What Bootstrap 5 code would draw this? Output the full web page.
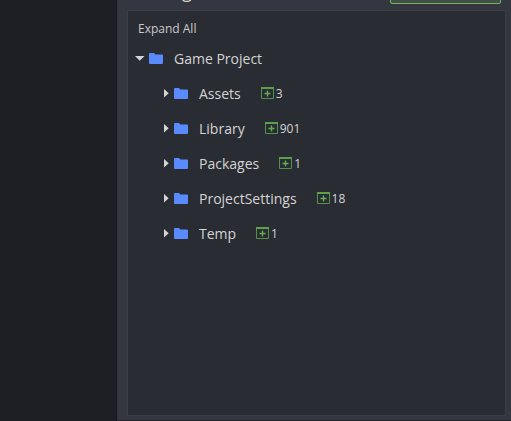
<!DOCTYPE html>
<html lang="en">
<head>
<meta charset="utf-8">
<meta name="viewport" content="width=device-width, initial-scale=1">
<title>Game Project</title>
<link href="https://cdn.jsdelivr.net/npm/bootstrap@5.3.0/dist/css/bootstrap.min.css" rel="stylesheet">
<style>
body{font-family:"Open Sans","Noto Sans",sans-serif;font-size:14px;background:#343740;color:#d4d4d4}
.side{width:117px;background:#1e1f24;border-right:1px solid #17181c}
.main-area{padding:0 5px 4px 10px;border-bottom:1px solid #25272d}
.top-strip{height:10px;padding:0 5px 0 55px}
.heading{font-size:18px;line-height:24px;margin-top:-21px}
.action{width:111px;height:34px;margin-top:-30px;border:1px solid #6cbb55;border-radius:2px;background:#454d4a}
.panel{background:#292c33;border:1px solid #3b3e46;padding:7px 0 0 6px}
.expand{font-size:12px;line-height:22px;padding-left:4px;margin-bottom:1px;color:#cacaca}
.tree-row{height:35px}
.children-list{padding-left:25px}
.arrow{width:15px;height:15px}
.folder{width:14px;height:11px;margin-right:11px}
.plus{width:13px;height:13px;margin-left:20px;margin-right:2px}
.count{font-size:12px}
</style>
</head>
<body class="vh-100 overflow-hidden">
<svg class="d-none">
  <symbol id="folder" viewBox="0 0 14 11"><path d="M0 1Q0 0 1 0H5L6.5 1.5H13Q14 1.5 14 2.5V10Q14 11 13 11H1Q0 11 0 10Z" fill="#598bff"/></symbol>
  <symbol id="right" viewBox="0 0 15 15"><path d="M5 3L9.7 7.2L5 11.5Z" fill="#d4d4d4"/></symbol>
  <symbol id="down" viewBox="0 0 15 15"><path d="M1 5H10.5L5.75 9.8Z" fill="#d4d4d4"/></symbol>
  <symbol id="plus" viewBox="0 0 13 13"><path d="M.5 1V11.5H12.5V1" fill="none" stroke="#579149"/><path d="M0 0H13V2H0Z" fill="#5da04c"/><path d="M3.5 6.5H9.5M6.5 3.5V9.5" stroke="#65ad53" stroke-width="1.4"/></symbol>
</svg>
<div class="d-flex h-100">
  <aside class="side flex-shrink-0"></aside>
  <main class="main-area d-flex flex-column flex-grow-1">
    <header class="top-strip d-flex justify-content-between align-items-start flex-shrink-0"><div class="heading">g</div><div class="action"></div></header>
    <section class="panel flex-grow-1">
      <div class="expand">Expand All</div>
      <div class="tree-row d-flex align-items-center"><svg class="arrow"><use href="#down"/></svg><svg class="folder"><use href="#folder"/></svg><span>Game Project</span></div>
      <div class="children-list">
        <div class="tree-row d-flex align-items-center"><svg class="arrow"><use href="#right"/></svg><svg class="folder"><use href="#folder"/></svg><span>Assets</span><svg class="plus"><use href="#plus"/></svg><span class="count">3</span></div>
        <div class="tree-row d-flex align-items-center"><svg class="arrow"><use href="#right"/></svg><svg class="folder"><use href="#folder"/></svg><span>Library</span><svg class="plus"><use href="#plus"/></svg><span class="count">901</span></div>
        <div class="tree-row d-flex align-items-center"><svg class="arrow"><use href="#right"/></svg><svg class="folder"><use href="#folder"/></svg><span>Packages</span><svg class="plus"><use href="#plus"/></svg><span class="count">1</span></div>
        <div class="tree-row d-flex align-items-center"><svg class="arrow"><use href="#right"/></svg><svg class="folder"><use href="#folder"/></svg><span>ProjectSettings</span><svg class="plus"><use href="#plus"/></svg><span class="count">18</span></div>
        <div class="tree-row d-flex align-items-center"><svg class="arrow"><use href="#right"/></svg><svg class="folder"><use href="#folder"/></svg><span>Temp</span><svg class="plus"><use href="#plus"/></svg><span class="count">1</span></div>
      </div>
    </section>
  </main>
</div>
</body>
</html>
